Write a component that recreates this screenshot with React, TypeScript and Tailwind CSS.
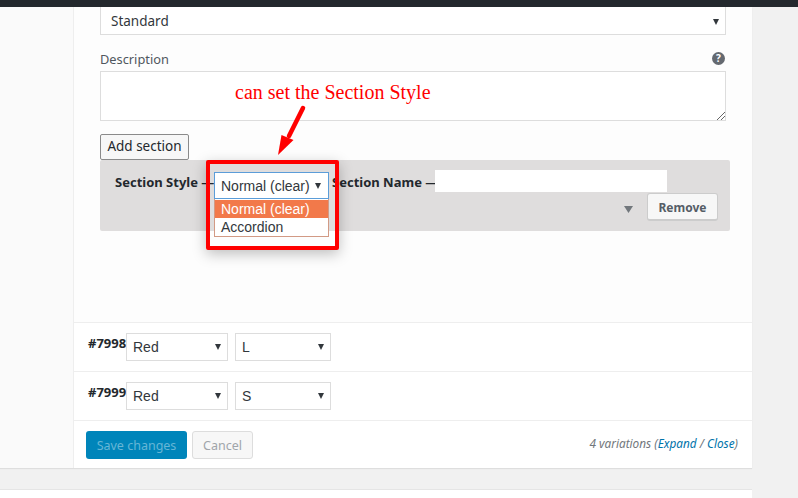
const Caret = ({ className = "" }: { className?: string }) => (
  <svg width="6" height="6" viewBox="0 0 6 6" className={className}>
    <path d="M0 0H6L3 6Z" fill="#32373c" />
  </svg>
);

const FakeSelect = ({ value, className }: { value: string; className: string }) => (
  <div className={`flex items-center justify-between bg-white border border-[#dddddd] pl-[6px] pr-[6px] text-[14px] text-[#32373c] font-['Liberation_Sans',sans-serif] ${className}`}>
    <span>{value}</span>
    <Caret />
  </div>
);

const VariationRow = ({ id, second }: { id: string; second: string }) => (
  <div className="flex items-start h-[49px] border-b border-[#eeeeee] pl-[14px] pt-[10px] bg-white">
    <span className="w-[38px] mt-[1px] text-[13px] leading-[18px] font-bold text-[#23282d] whitespace-nowrap">{id}</span>
    <FakeSelect value="Red" className="w-[102px] h-[28px]" />
    <FakeSelect value={second} className="w-[96px] h-[28px] ml-[7px]" />
  </div>
);

export default function App() {
  return (
    <div className="relative w-[798px] h-[498px] overflow-hidden bg-[#f1f1f1] font-['Noto_Sans',sans-serif]">
      <div className="h-[7px] bg-[#23282d]" />

      <div className="flex w-[752px] h-[461px] bg-white shadow-[0_1px_1px_rgba(0,0,0,0.08)]">
        <div className="w-[74px] shrink-0 bg-[#fafafa] border-r border-[#eeeeee]" />

        <div className="flex-1 min-w-0 flex flex-col">
          {/* Section form */}
          <div className="h-[316px] shrink-0 bg-[#fdfdfd] pl-[26px] border-b border-[#eeeeee]">
            <div className="flex items-center justify-between w-[626px] h-[28px] pt-[2px] bg-white border border-t-0 border-[#dddddd] pl-[10px] pr-[6px] text-[13.5px] text-[#32373c]">
              <span>Standard</span>
              <Caret />
            </div>

            <div className="flex items-center justify-between w-[626px] h-[36px] pt-[12px] pr-[1px]">
              <span className="mt-[2px] text-[12.8px] text-[#50575e]">Description</span>
              <span className="mb-[2px] flex items-center justify-center w-[13px] h-[13px] rounded-full bg-[#646970] text-white text-[10px] font-bold leading-none">?</span>
            </div>

            <div className="relative w-[626px] h-[50px] bg-white border border-[#dddddd]">
              <svg width="8" height="8" viewBox="0 0 8 8" className="absolute right-0 bottom-0">
                <path d="M0 8L8 0M4 8L8 4" stroke="#666" strokeWidth="1" />
              </svg>
            </div>

            <button className="block mt-[13px] w-[89px] h-[26px] pb-[2px] bg-[#f7f7f7] border border-[#8a8a8a] rounded-[2px] text-[13.5px] text-[#23282d]">
              Add section
            </button>

            <div className="w-[630px] h-[71px] bg-[#dfdddd] rounded-[2px] pl-[15px] pr-[12px]">
              <div className="flex items-start h-[33px] text-[13px] font-bold text-[#23282d]">
                <span className="w-[99px] mt-[13px] leading-[18px] whitespace-nowrap">Section Style —</span>
                <div className="relative mt-[12px] w-[115px] h-[27px] shrink-0">
                  <div className="flex items-center justify-between h-full pt-[1px] bg-white border border-[#5b9dd9] pl-[6px] pr-[7px] text-[14px] font-normal text-[#32373c] font-['Liberation_Sans',sans-serif]">
                    <span>Normal (clear)</span>
                    <Caret />
                  </div>
                  <div className="absolute z-10 left-0 top-full w-full border border-t-0 border-[#d29a85] bg-white text-[14px] font-normal leading-[18px] text-[#32373c] font-['Liberation_Sans',sans-serif]">
                    <div className="bg-[#f2794a] text-white pl-[6px] h-[18px] mt-[1px]">Normal (clear)</div>
                    <div className="pl-[6px] h-[18px]">Accordion</div>
                  </div>
                </div>
                <span className="w-[106px] mt-[13px] pl-[3px] leading-[18px] whitespace-nowrap">Section Name —</span>
                <div className="mt-[10px] w-[232px] h-[22px] bg-white" />
              </div>
              <div className="flex items-center justify-end">
                <svg width="9" height="7" viewBox="0 0 9 7" className="mr-[14px] mt-[4px]">
                  <path d="M0 0H9L4.5 7Z" fill="#72777c" />
                </svg>
                <button className="w-[71px] h-[28px] pt-[2px] bg-[#f7f7f7] border border-[#cccccc] border-b-2 rounded-[3px] text-[12px] font-bold text-[#555d66]">
                  Remove
                </button>
              </div>
            </div>
          </div>

          <VariationRow id="#7998" second="L" />
          <VariationRow id="#7999" second="S" />

          {/* Footer */}
          <div className="flex items-center h-[47px] bg-white pl-[12px] pr-[14px]">
            <button className="w-[101px] h-[28px] pt-[3px] bg-[#0085ba] rounded-[3px] text-[12.5px] text-[#66b6d6]">Save changes</button>
            <button className="w-[61px] h-[28px] pt-[3px] ml-[5px] bg-[#f7f7f7] border border-[#dddddd] rounded-[3px] text-[12.5px] text-[#a0a5aa]">Cancel</button>
            <span className="ml-auto mb-[1px] text-[11.8px] italic text-[#72777c]">
              4 variations (<span className="text-[#0073aa]">Expand</span> / <span className="text-[#0073aa]">Close</span>)
            </span>
          </div>
        </div>
      </div>

      <div className="w-[752px] h-[20px] mt-[21px] bg-white border-t border-[#e5e5e5]" />

      {/* Annotation layered on top of the screenshot */}
      <div className="absolute left-[235px] top-[79px] text-[20px] leading-[26px] text-[#ff0000] font-['Liberation_Serif',serif] whitespace-nowrap">
        can set the Section Style
      </div>
      <svg width="40" height="60" viewBox="0 0 40 60" className="absolute left-[272px] top-[102px] z-20">
        <path d="M31 6L17 34" stroke="#ff0000" strokeWidth="4.5" strokeLinecap="round" />
        <path d="M9.5 33L21.5 38L6 53Z" fill="#ff0000" />
      </svg>
      <div className="absolute z-20 left-[206px] top-[160px] w-[133px] h-[90px] border-[4px] border-[#ff0000] rounded-[2px] shadow-[0_4px_14px_rgba(0,0,0,0.25)]" />
    </div>
  );
}
